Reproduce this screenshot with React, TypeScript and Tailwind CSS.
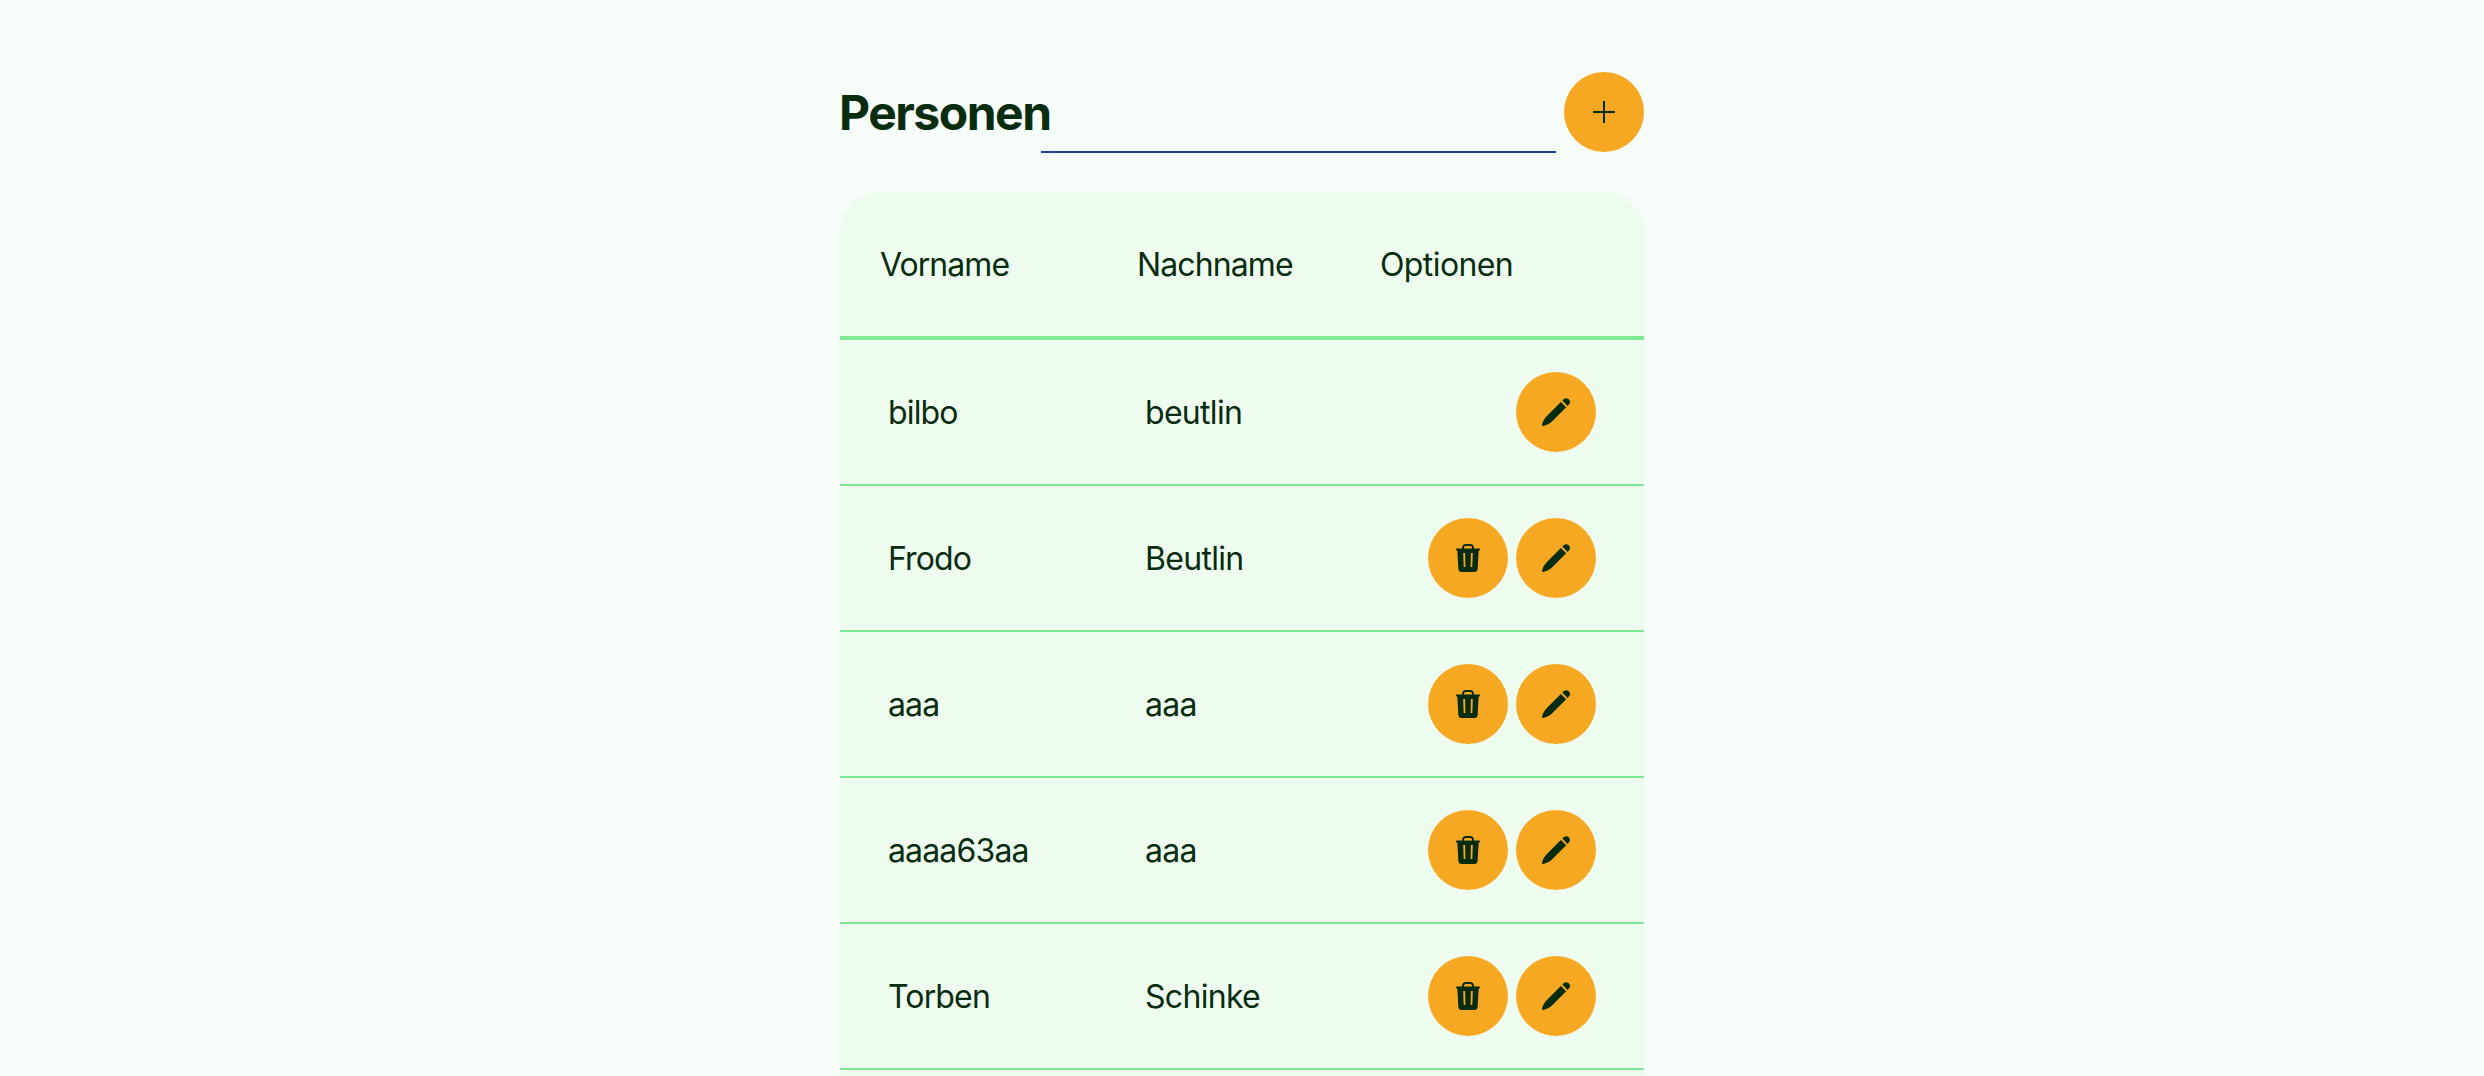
import React from "react";

type Person = { first: string; last: string; removable: boolean };

const people: Person[] = [
  { first: "bilbo", last: "beutlin", removable: false },
  { first: "Frodo", last: "Beutlin", removable: true },
  { first: "aaa", last: "aaa", removable: true },
  { first: "aaaa63aa", last: "aaa", removable: true },
  { first: "Torben", last: "Schinke", removable: true },
];

function PlusIcon() {
  return (
    <svg width="28" height="28" viewBox="0 0 28 28" fill="none" stroke="currentColor" strokeWidth="2">
      <path d="M14 3v22M3 14h22" />
    </svg>
  );
}

function PencilIcon() {
  return (
    <svg width="28" height="28" viewBox="0 0 28 28" fill="currentColor">
      <path d="M18.900 4 24.200 9.300 10.200 23.300C7.700 25.800 4.400 27.500 1 28Q-0.100 28.100 0 27C0.500 23.600 2.400 20.300 4.900 17.900Z" />
      <path d="M20.300 2.600 21.600 1.300a3.900 3.900 0 0 1 5.200 0 3.900 3.900 0 0 1 0 5.300L25.600 7.900Z" />
    </svg>
  );
}

function TrashIcon() {
  return (
    <svg width="28" height="28" viewBox="0 0 28 28" fill="currentColor">
      <path d="M9 5V3.700A2.700 2.700 0 0 1 11.700 1h4.600A2.700 2.700 0 0 1 19 3.700V5" fill="none" stroke="currentColor" strokeWidth="2" />
      <path
        fillRule="evenodd"
        d="M2.800 4.500h22.400a.8.8 0 0 1 .8.800v.5a.8.8 0 0 1-.8.800h-.5L23.600 25a3.200 3.200 0 0 1-3.200 3H7.600a3.200 3.200 0 0 1-3.200-3L3.300 6.600h-.5a.8.8 0 0 1-.8-.8v-.5a.8.8 0 0 1 .8-.8ZM9.200 9l.5 14h1.700L11.100 9Zm7.700 0-.3 14h1.700L18.800 9Z"
      />
    </svg>
  );
}

function RoundButton({ label, children }: { label: string; children: React.ReactNode }) {
  return (
    <button aria-label={label} className="flex size-20 shrink-0 items-center justify-center rounded-full bg-[#f7a823]">
      {children}
    </button>
  );
}

export default function App() {
  return (
    <div className="h-[1076px] overflow-hidden bg-[#f6fcf8] font-['Inter',sans-serif] text-[#082c10]">
      <main className="mx-auto w-[804px] pt-[72px]">
        <header className="flex h-20 items-center">
          <h1 className="-ml-px w-[202px] whitespace-nowrap pt-[2px] text-[48px] leading-[48px] font-bold tracking-[-1.5px]">Personen</h1>
          <div className="mr-2 h-[82px] flex-1 border-b-2 border-[#174390]" />
          <RoundButton label="Hinzufügen">
            <PlusIcon />
          </RoundButton>
        </header>
        <section className="mt-10 rounded-t-[40px] bg-[#edfcef] text-[32px] leading-[48px] tracking-[-0.85px]">
          <div className="grid h-[148px] grid-cols-[257px_243px_1fr] items-center border-b-4 border-[#80e892] px-10 pt-[2px]">
            <span className="tracking-[-0.95px]">Vorname</span>
            <span className="tracking-[-0.9px]">Nachname</span>
            <span className="tracking-[-0.6px]">Optionen</span>
          </div>
          {people.map((p) => (
            <div key={p.first} className="grid h-[146px] grid-cols-[257px_243px_1fr] items-center border-b-2 border-[#80e892] px-12">
              <span className="pt-[2px]">{p.first}</span>
              <span className="pt-[2px] tracking-[-0.7px]">{p.last}</span>
              <div className="flex justify-end gap-2">
                {p.removable && (
                  <RoundButton label="Löschen">
                    <TrashIcon />
                  </RoundButton>
                )}
                <RoundButton label="Bearbeiten">
                  <PencilIcon />
                </RoundButton>
              </div>
            </div>
          ))}
          <div className="h-10" />
        </section>
      </main>
    </div>
  );
}
